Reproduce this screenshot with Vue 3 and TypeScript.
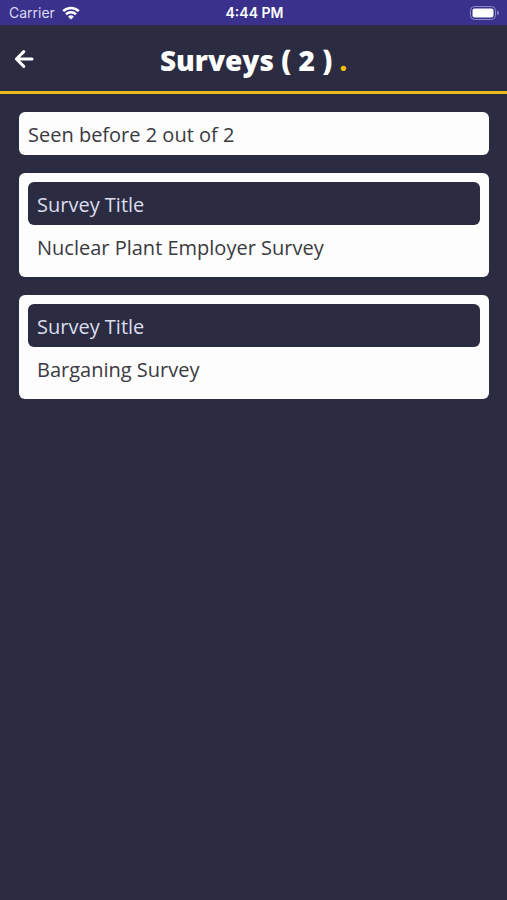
<script setup lang="ts">
import { computed, ref } from 'vue'

interface Survey {
  id: number
  title: string
  seen: boolean
}

const surveys = ref<Survey[]>([
  { id: 1, title: 'Nuclear Plant Employer Survey', seen: true },
  { id: 2, title: 'Barganing Survey', seen: true },
])

const seenCount = computed(() => surveys.value.filter((s) => s.seen).length)
</script>

<template>
  <div class="screen">
    <div class="status">
      <div class="carrier">
        <span>Carrier</span>
        <svg class="wifi" viewBox="0 0 18 14" aria-hidden="true">
          <path d="M1.2 5.1a11.2 11.2 0 0 1 15.6 0M4 8.2a7.2 7.2 0 0 1 10 0" />
          <path class="wifi-dot" d="M9 13.6 6.1 10.7a4.1 4.1 0 0 1 5.8 0z" />
        </svg>
      </div>
      <span class="time">4:44 PM</span>
      <svg class="battery" viewBox="0 0 30 14" aria-hidden="true">
        <rect class="battery-shell" x="0.5" y="0.5" width="25" height="13" rx="4" />
        <rect class="battery-level" x="2.5" y="2.5" width="21" height="9" rx="2" />
        <path class="battery-tip" d="M27.2 4.8c2.4.6 2.4 3.8 0 4.4z" />
      </svg>
    </div>

    <header class="header">
      <button class="back" type="button" aria-label="Back">
        <svg viewBox="0 0 20 20" aria-hidden="true">
          <path d="M18 10H2.6M9.8 2.6 2.4 10l7.4 7.4" />
        </svg>
      </button>
      <h1 class="title">Surveys ( {{ surveys.length }} ) <span class="dot">.</span></h1>
    </header>

    <main class="content">
      <p class="summary">Seen before {{ seenCount }} out of {{ surveys.length }}</p>
      <article v-for="survey in surveys" :key="survey.id" class="card">
        <h2 class="card-label">Survey Title</h2>
        <p class="card-title">{{ survey.title }}</p>
      </article>
    </main>
  </div>
</template>

<style>
body {
  background: #2b2c42;
}
</style>

<style scoped>
.screen {
  min-height: 100vh;
  background: #2b2c42;
  color: #3a3a40;
  font-family: 'Open Sans', 'Noto Sans', sans-serif;
}

.status {
  display: grid;
  grid-template-columns: 1fr auto 1fr;
  align-items: center;
  height: 25px;
  padding: 0 7px 0 9px;
  background: #39318c;
  color: #ffffff;
  font-family: Inter, sans-serif;
  font-size: 14px;
  line-height: 26px;
}

.carrier {
  display: flex;
  align-items: center;
  gap: 7px;
  color: #dcdaf2;
}

.wifi {
  width: 18px;
  height: 14px;
  fill: none;
  stroke: #ffffff;
  stroke-width: 2.6;
}

.wifi-dot {
  fill: #ffffff;
  stroke: none;
}

.time {
  font-weight: 600;
}

.battery {
  justify-self: end;
  width: 30px;
  height: 14px;
}

.battery-shell {
  fill: none;
  stroke: #8f89c6;
}

.battery-level {
  fill: #ffffff;
}

.battery-tip {
  fill: #8f89c6;
}

.header {
  display: grid;
  grid-template-columns: 48px 1fr 48px;
  align-items: center;
  height: 66px;
  border-bottom: 3px solid #e6b91e;
}

.back {
  display: flex;
  padding: 2px 0 0 14px;
  border: 0;
  background: none;
  cursor: pointer;
}

.back svg {
  width: 20px;
  height: 20px;
  fill: none;
  stroke: #ffffff;
  stroke-width: 3;
  stroke-linecap: round;
  stroke-linejoin: round;
}

.title {
  grid-column: 2;
  margin: 0;
  padding-top: 4px;
  color: #ffffff;
  font-size: 28px;
  font-weight: 800;
  line-height: 36px;
  text-align: center;
  white-space: nowrap;
}

.dot {
  color: #f5c400;
  font-family: Lato, sans-serif;
  font-size: 32px;
  font-weight: 900;
  line-height: 24px;
}

.content {
  display: grid;
  gap: 18px;
  padding: 18px 18px 18px 19px;
}

.summary,
.card-label,
.card-title {
  margin: 0;
  padding: 2px 9px 0;
  font-size: 20px;
  font-weight: 400;
  line-height: 41px;
}

.summary,
.card {
  border-radius: 6px;
  background: #fdfdfe;
}

.card {
  padding: 9px;
}

.card-label {
  border-radius: 6px;
  background: #2b2c42;
  color: #dcdded;
}
</style>
